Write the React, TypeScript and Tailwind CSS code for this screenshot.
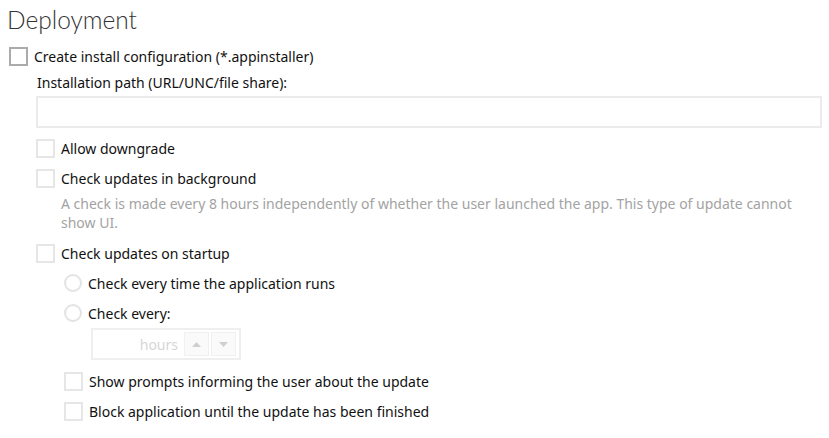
import React from 'react';

const font = { fontFamily: '"Segoe UI", "Noto Sans", "Liberation Sans", sans-serif' };
const titleFont = { fontFamily: '"Segoe UI Light", Lato, "Noto Sans", sans-serif' };

function CheckBox({ dark = false }: { dark?: boolean }) {
  return (
    <span
      className={
        'inline-block w-[19px] h-[19px] shrink-0 border-2 bg-white ' +
        (dark ? 'border-[#ababab]' : 'border-[#e6e6e6]')
      }
    />
  );
}

function Radio() {
  return <span className="inline-block w-[18px] h-[18px] shrink-0 rounded-full border-2 border-[#e3e3e3] bg-white" />;
}

function Row({ children, indent, text }: { children: React.ReactNode; indent: string; text: string }) {
  return (
    <div className={'flex items-center h-[30px] ' + indent}>
      {children}
      <span className="ml-[6px] text-[14px] text-[#111]">{text}</span>
    </div>
  );
}

export default function App() {
  return (
    <div className="w-[829px] h-[438px] bg-white overflow-hidden" style={font}>
      {/* --- Header --- */}
      <div className="h-[41px] pl-[7px] pt-[3px] text-[24.5px] font-light leading-[34px] text-[#333]" style={titleFont}>
        Deployment
      </div>

      {/* --- Install configuration --- */}
      <Row indent="pl-[9px]" text="Create install configuration (*.appinstaller)">
        <CheckBox dark />
      </Row>
      <div className="h-[22px] pl-[37px] flex items-center text-[14px] text-[#111]">
        Installation path (URL/UNC/file share):
      </div>
      <div className="mt-[3px] ml-[36px] w-[786px] h-[32px] border-2 border-[#ebebeb] bg-white" />

      <div className="mt-[5px]">
        <Row indent="pl-[36px]" text="Allow downgrade">
          <CheckBox />
        </Row>
        <Row indent="pl-[36px]" text="Check updates in background">
          <CheckBox />
        </Row>
        <p className="pl-[61px] pr-[14px] pt-[1px] text-[14px] leading-[19px] text-[#a3a3a3]">
          A check is made every 8 hours independently of whether the user launched the app. This type of update cannot
          show UI.
        </p>
        <div className="mt-[6px]">
          <Row indent="pl-[36px]" text="Check updates on startup">
            <CheckBox />
          </Row>
          <Row indent="pl-[64px]" text="Check every time the application runs">
            <Radio />
          </Row>
          <Row indent="pl-[64px]" text="Check every:">
            <Radio />
          </Row>

          {/* --- Hours spinner (disabled) --- */}
          <div className="ml-[91px] w-[150px] h-[32px] border-2 border-[#efefef] flex items-center justify-end pr-[3px] gap-[2px]">
            <span className="mr-[4px] text-[14px] text-[#d6d6d6]">hours</span>
            <span className="w-[25px] h-[24px] border border-[#f0f0f0] bg-[#fafafa] flex items-center justify-center">
              <svg width="9" height="5" viewBox="0 0 9 5"><path d="M0 5 L4.5 0 L9 5 Z" fill="#cfcfcf" /></svg>
            </span>
            <span className="w-[25px] h-[24px] border border-[#f0f0f0] bg-[#fafafa] flex items-center justify-center">
              <svg width="9" height="5" viewBox="0 0 9 5"><path d="M0 0 L9 0 L4.5 5 Z" fill="#cfcfcf" /></svg>
            </span>
          </div>

          <div className="mt-[6px]">
            <Row indent="pl-[64px]" text="Show prompts informing the user about the update">
              <CheckBox />
            </Row>
            <Row indent="pl-[64px]" text="Block application until the update has been finished">
              <CheckBox />
            </Row>
          </div>
        </div>
      </div>
    </div>
  );
}
